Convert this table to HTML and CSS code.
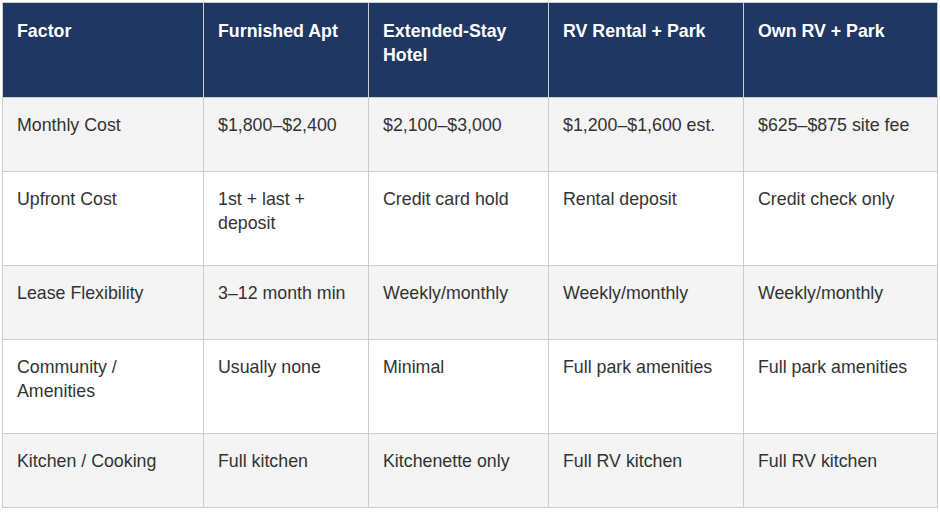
FILE: index.html
```html
<!DOCTYPE html>
<html lang="en">
<head>
<meta charset="utf-8">
<title>Housing comparison</title>
<link rel="stylesheet" href="styles.css">
</head>
<body>
<table class="compare">
  <colgroup>
    <col class="c1"><col class="c2"><col class="c3"><col class="c4"><col class="c5">
  </colgroup>
  <thead>
    <tr class="row-tall">
      <th>Factor</th>
      <th>Furnished Apt</th>
      <th>Extended-Stay Hotel</th>
      <th>RV Rental + Park</th>
      <th>Own RV + Park</th>
    </tr>
  </thead>
  <tbody>
    <tr class="row-short alt">
      <td>Monthly Cost</td>
      <td>$1,800–$2,400</td>
      <td>$2,100–$3,000</td>
      <td>$1,200–$1,600 est.</td>
      <td>$625–$875 site fee</td>
    </tr>
    <tr class="row-tall">
      <td>Upfront Cost</td>
      <td>1st + last + deposit</td>
      <td>Credit card hold</td>
      <td>Rental deposit</td>
      <td>Credit check only</td>
    </tr>
    <tr class="row-short alt">
      <td>Lease Flexibility</td>
      <td>3–12 month min</td>
      <td>Weekly/monthly</td>
      <td>Weekly/monthly</td>
      <td>Weekly/monthly</td>
    </tr>
    <tr class="row-tall">
      <td>Community / Amenities</td>
      <td>Usually none</td>
      <td>Minimal</td>
      <td>Full park amenities</td>
      <td>Full park amenities</td>
    </tr>
    <tr class="row-short alt">
      <td>Kitchen / Cooking</td>
      <td>Full kitchen</td>
      <td>Kitchenette only</td>
      <td>Full RV kitchen</td>
      <td>Full RV kitchen</td>
    </tr>
  </tbody>
</table>
</body>
</html>
```
FILE: styles.css
```css
html, body {
  margin: 0;
  padding: 0;
  background: #ffffff;
}
body {
  padding: 2px 0 0 2px;
  font-family: "Liberation Sans", Arial, sans-serif;
  font-size: 17.8px;
  line-height: 24px;
  color: #333333;
}
.compare {
  border-collapse: collapse;
  table-layout: fixed;
  width: 935px;
  border: 1px solid #cccccc;
}
.c1 { width: 201px; }
.c2 { width: 165px; }
.c3 { width: 180px; }
.c4 { width: 195px; }
.c5 { width: 194px; }
.compare th,
.compare td {
  border: 1px solid #cccccc;
  padding: 15px 14px 0 14px;
  text-align: left;
  vertical-align: top;
  box-sizing: border-box;
}
.compare th {
  background: #1f3762;
  color: #ffffff;
  font-weight: bold;
  padding-top: 16px;
}
.row-tall th,
.row-tall td { height: 94px; }
.row-short td { height: 74px; }
.compare thead .row-tall th { height: 95px; }
.alt td { background: #f4f4f4; }
```
